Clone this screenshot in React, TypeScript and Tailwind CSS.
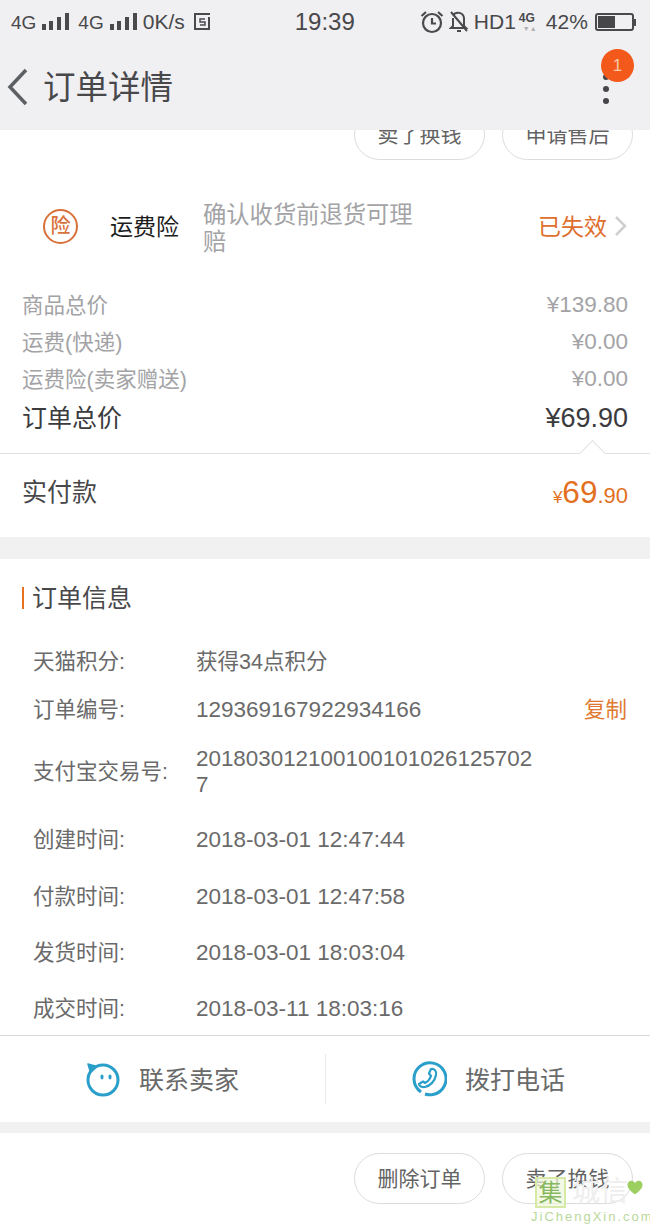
import React from "react";

const font = "[font-family:'Liberation_Sans','Noto_Sans_CJK_SC',sans-serif]";

const Signal = () => (
    <svg width="27" height="20" viewBox="0 0 27 20" className="fill-[#4a4a4d]">
        <rect x="0" y="12" width="4" height="6" />
        <rect x="7" y="9" width="4" height="9" />
        <rect x="15" y="5" width="4" height="13" />
        <rect x="23" y="1" width="4" height="17" />
    </svg>
);

const StatusBar = () => (
    <div className="flex h-[44px] items-center text-[19px] text-[#48484b]">
        <span className="ml-[11px] pt-[2px]">4G</span>
        <span className="ml-[6px]"><Signal /></span>
        <span className="ml-[9px] pt-[2px]">4G</span>
        <span className="ml-[6px]"><Signal /></span>
        <span className="ml-[6px] text-[21px]">0K/s</span>
        <svg width="20" height="20" viewBox="0 0 20 20" className="ml-[7px] fill-none stroke-[#4a4a4d]">
            <path d="M2 2h16M3 2v15h15M17 5v13" strokeWidth="2" />
            <path d="M13 7H8v3h5v3H8" strokeWidth="1.5" />
        </svg>
        <span className="ml-[83px] text-[24px]">19:39</span>
        <svg width="24" height="24" viewBox="0 0 24 24" className="ml-[65px] fill-none stroke-[#4a4a4d]" strokeWidth="2.2">
            <circle cx="12" cy="13" r="9" />
            <path d="M12 8v5.5h4M1.5 6 6 2M22.5 6 18 2" />
        </svg>
        <svg width="20" height="24" viewBox="0 0 20 24" className="ml-[5px] fill-none stroke-[#4a4a4d]" strokeWidth="2">
            <path d="M4 5.5A6 6 0 0 1 15 8v8l2 2H2l2-2V8M8 21h4M2 2l16 19" />
        </svg>
        <span className="ml-[5px] text-[21px]">HD1</span>
        <span className="relative ml-[3px] h-[24px] w-[21px]">
            <span className="absolute top-[1px] left-0 text-[12px] leading-[14px] font-bold">4G</span>
            <span className="absolute top-[15px] left-[4px] text-[7px] leading-[8px] text-[#b0b0b3]">▼▲</span>
        </span>
        <span className="ml-[6px] text-[21px]">42%</span>
        <span className="ml-[7px] flex h-[18px] w-[39px] rounded-[3px] border-2 border-[#4a4a4d] p-[1px]">
            <span className="h-full w-[17px] bg-[#47474a]" />
        </span>
        <span className="h-[7px] w-[2px] bg-[#4a4a4d]" />
    </div>
);

const NavBar = () => (
    <div className="relative flex h-[86px] items-center">
        <svg width="22" height="38" viewBox="0 0 22 38" className="ml-[7px] fill-none stroke-[#5d6062]" strokeWidth="3.5">
            <path d="M19 2 3 19l16 17" />
        </svg>
        <span className="ml-[14px] pt-[3px] text-[32.5px] text-[#48484b]">订单详情</span>
        <div className="absolute top-[30px] left-[603px] flex flex-col gap-[6px]">
            <span className="size-[6px] rounded-full bg-[#45454a]" />
            <span className="size-[6px] rounded-full bg-[#45454a]" />
            <span className="size-[6px] rounded-full bg-[#45454a]" />
        </div>
        <span className="absolute top-[5px] left-[601px] flex size-[33px] items-center justify-center rounded-full bg-[#f2591b] text-[17px] text-[#f8c9a8]">
            1
        </span>
    </div>
);

const PillButton = ({ label }: { label: string }) => (
    <span className="flex h-[51px] w-[131px] items-center justify-center rounded-full border border-[#dcdcdc] text-[21px] text-[#636363]">
        {label}
    </span>
);

const PriceRow = ({ label, value }: { label: string; value: string }) => (
    <div className="flex h-[37px] items-center justify-between text-[#a3a3a6]">
        <span className="text-[21.5px]">{label}</span>
        <span className="pb-[3px] text-[22.5px]">{value}</span>
    </div>
);

const InfoRow = ({ label, children, className }: { label: string; children: React.ReactNode; className: string }) => (
    <div className={`flex items-center pt-[2px] pl-[33px] text-[21.5px] text-[#6a6a6a] ${className}`}>
        <span className="w-[163px] shrink-0">{label}</span>
        {children}
    </div>
);

const ChatIcon = () => (
    <svg width="36" height="36" viewBox="0 0 36 36" className="fill-none stroke-[#2a9fc9]" strokeWidth="3">
        <circle cx="18" cy="19" r="15" />
        <path d="M3 3l9 2.5-6.5 6Z" className="fill-[#2a9fc9]" strokeWidth="1.5" strokeLinejoin="round" />
        <ellipse cx="17" cy="16" rx="1.6" ry="2.4" className="fill-[#2a9fc9] stroke-none" />
        <ellipse cx="25" cy="16" rx="1.6" ry="2.4" className="fill-[#2a9fc9] stroke-none" />
    </svg>
);

const PhoneIcon = () => (
    <svg width="36" height="36" viewBox="0 0 36 36" className="fill-none stroke-[#2a9fc9]" strokeWidth="3">
        <path d="M10 31A16 16 0 1 1 22 33.5 16 16 0 0 1 14 33" />
        <path d="M20 8c3-1 6 2 5 6-1 6-6 11-11 12-3 .5-6-1-6-3l4-2.5 2 1.5c2-1 5-4 6-7l-2-2.5Z" strokeWidth="2.2" strokeLinejoin="round" />
    </svg>
);

export default function App() {
    return (
        <div className={`relative h-[1224px] w-[650px] overflow-hidden bg-white ${font}`}>
            <div className="bg-[#f0eff2]">
                <StatusBar />
                <NavBar />
            </div>

            <div className="flex h-[30px] items-end justify-end gap-[17px] overflow-hidden pr-[17px]">
                <PillButton label="卖了换钱" />
                <PillButton label="申请售后" />
            </div>

            <div className="flex h-[128px] items-center pt-[4px] pl-[43px]">
                <span className="flex size-[35px] items-center justify-center rounded-full border-2 border-[#d9713a] text-[20px] font-medium text-[#d9713a]">
                    险
                </span>
                <span className="ml-[32px] w-[93px] pt-[3px] text-[23px] text-[#1c1c1c]">运费险</span>
                <span className="w-[222px] pt-[5px] text-[23.3px] leading-[27px] text-[#a3a3a6]">确认收货前退货可理赔</span>
                <span className="ml-[113px] pt-[2px] text-[23px] text-[#de6f2d]">已失效</span>
                <svg width="14" height="22" viewBox="0 0 14 22" className="ml-[7px] fill-none stroke-[#cfcfd1]" strokeWidth="2.5">
                    <path d="M2 2l9 9-9 9" />
                </svg>
            </div>

            <div className="px-[22px]">
                <PriceRow label="商品总价" value="¥139.80" />
                <PriceRow label="运费(快递)" value="¥0.00" />
                <PriceRow label="运费险(卖家赠送)" value="¥0.00" />
                <div className="flex h-[38px] items-center justify-between text-[#3b3b3e]">
                    <span className="pt-[2px] text-[25px]">订单总价</span>
                    <span className="text-[27px]">¥69.90</span>
                </div>
            </div>

            <div className="relative mt-[16px] h-[84px] border-t border-[#e2e2e4]">
                <span className="absolute top-[-10px] left-[583px] size-[19px] rotate-45 border-t border-l border-[#e2e2e4] bg-white" />
                <div className="flex h-[78px] items-center justify-between px-[22px]">
                    <span className="text-[25px] text-[#48484b]">实付款</span>
                    <span className="text-[#e2701f]">
                        <span className="text-[17px]">¥</span>
                        <span className="text-[31.5px]">69</span>
                        <span className="text-[22px]">.90</span>
                    </span>
                </div>
            </div>

            <div className="h-[22px] bg-[#f1f1f1]" />

            <div className="flex h-[78px] items-center pl-[22px]">
                <span className="h-[22px] w-[2px] bg-[#e8701e]" />
                <span className="ml-[8px] pt-[2px] text-[25px] text-[#48484b]">订单信息</span>
            </div>

            <InfoRow label="天猫积分:" className="h-[48px]">
                <span>获得34点积分</span>
            </InfoRow>
            <InfoRow label="订单编号:" className="h-[48px]">
                <span className="text-[22.5px]">129369167922934166</span>
                <span className="ml-auto pr-[23px] text-[#e07a30]">复制</span>
            </InfoRow>
            <InfoRow label="支付宝交易号:" className="h-[76px]">
                <span className="w-[340px] text-[22.4px] leading-[26px] break-all">2018030121001001010261257027</span>
            </InfoRow>
            <InfoRow label="创建时间:" className="h-[60px]">
                <span className="text-[22.5px]">2018-03-01 12:47:44</span>
            </InfoRow>
            <InfoRow label="付款时间:" className="h-[54px]">
                <span className="text-[22.5px]">2018-03-01 12:47:58</span>
            </InfoRow>
            <InfoRow label="发货时间:" className="h-[58px]">
                <span className="text-[22.5px]">2018-03-01 18:03:04</span>
            </InfoRow>
            <InfoRow label="成交时间:" className="h-[54px]">
                <span className="text-[22.5px]">2018-03-11 18:03:16</span>
            </InfoRow>

            <div className="flex h-[87px] items-center border-t border-[#d9d9d9]">
                <div className="flex w-[325px] items-center gap-[18px] pl-[85px]">
                    <ChatIcon />
                    <span className="pt-[3px] text-[25px] text-[#6a6a6a]">联系卖家</span>
                </div>
                <span className="h-[50px] w-px bg-[#ececec]" />
                <div className="flex items-center gap-[18px] pl-[85px]">
                    <PhoneIcon />
                    <span className="pt-[3px] text-[25px] text-[#6a6a6a]">拨打电话</span>
                </div>
            </div>

            <div className="h-[11px] bg-[#f1f1f1]" />

            <div className="flex justify-end gap-[17px] pt-[20px] pr-[17px]">
                <PillButton label="删除订单" />
                <PillButton label="卖了换钱" />
            </div>

            {/* watermark */}
            <div className="absolute top-[1177px] left-[535px] flex size-[31px] items-center justify-center border-2 border-[#d6e9a6] bg-[#f0f7dc]/70 text-[24px] leading-none text-[#86b85f]">
                集
            </div>
            <div className="absolute top-[1176px] left-[572px] text-[28px] leading-[32px] text-[#eeeeee]">城信</div>
            <svg width="18" height="18" viewBox="0 0 22 22" className="absolute top-[1178px] left-[626px]">
                <path d="M11 20C4 15 1 11 2 7c1-4 6-5 9-1 3-4 8-3 9 1 1 4-2 8-9 13Z" className="fill-[#9ccf5f]" />
            </svg>
            <div className="absolute top-[1210px] left-[531px] text-[13px] leading-[14px] tracking-[2px] text-[#b9d89a]">JiChengXin.com</div>
        </div>
    );
}
